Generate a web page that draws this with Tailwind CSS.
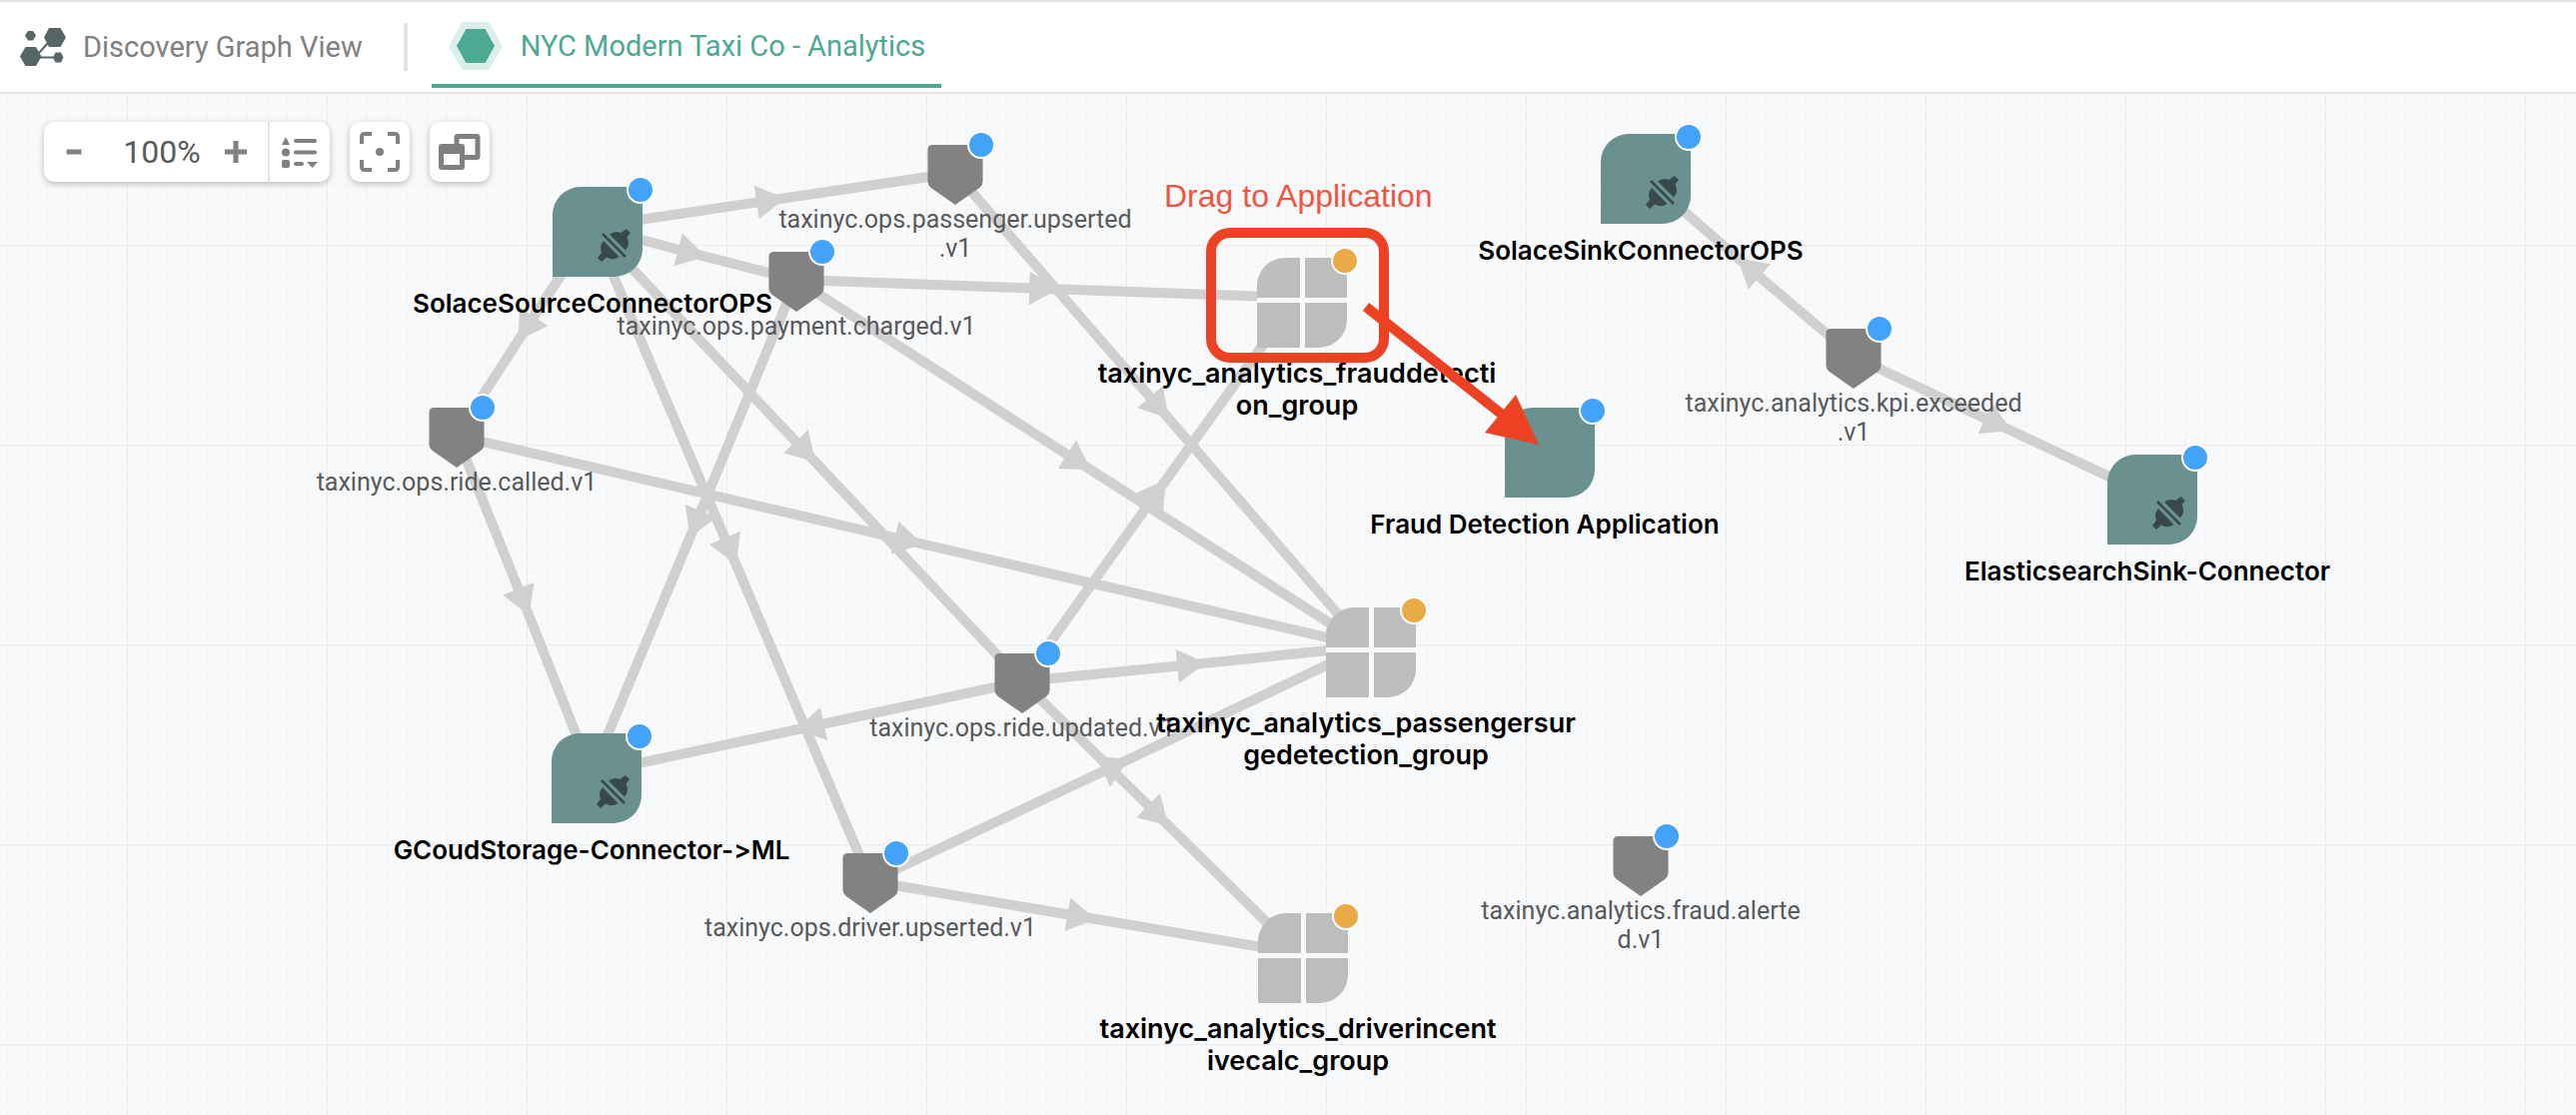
<!DOCTYPE html>
<html lang="en">
<head>
<meta charset="utf-8">
<title>NYC Modern Taxi Co - Analytics</title>
<script src="https://cdn.jsdelivr.net/npm/@tailwindcss/browser@4"></script>
</head>
<body class="flex min-h-screen flex-col bg-white font-['Roboto',sans-serif]">

<svg class="hidden" aria-hidden="true">
  <symbol id="badge-shape" viewBox="0 0 28 28"><circle cx="14" cy="14" r="13" fill="currentColor" stroke="#fbfcfd" stroke-width="2"/></symbol>
  <symbol id="app" viewBox="0 0 90 90"><path fill="#6a918f" d="M28 0H90V62A28 28 0 0 1 62 90H0V28A28 28 0 0 1 28 0Z"/></symbol>
  <symbol id="plug" viewBox="0 0 33 33">
    <g fill="#374a49">
      <path d="M12 5.500A11.500 11.500 0 0 1 23.500 4L28.500 0L33 4L29.500 8.500A11.500 11.500 0 0 1 28 21.500Z"/>
      <path d="M6 12L21.500 28A11.500 11.500 0 0 1 9 28.500L4 33L0 29L4 24A11.500 11.500 0 0 1 6 12Z"/>
    </g>
    <path d="M5 5L28 28" stroke="#374a49" stroke-width="2.500"/>
  </symbol>
  <symbol id="group" viewBox="0 0 90 90"><path fill="#f8f9fb" d="M28 0H90V62A28 28 0 0 1 62 90H0V28A28 28 0 0 1 28 0Z"/><path fill="#bdbdbd" d="M28 0H43V40H0V28A28 28 0 0 1 28 0ZM48 0H90V40H48ZM0 45H43V90H0ZM48 45H90V62A28 28 0 0 1 62 90H48Z"/></symbol>
  <symbol id="event" viewBox="0 0 56 61"><path fill="#828282" d="M5 0H51Q56 0 56 5V37Q56 41 53 43.500L28 61L3 43.500Q0 41 0 37V5Q0 0 5 0Z"/></symbol>
</svg>

<header class="flex h-[94px] shrink-0 items-center border-y-2 border-[#e3e3e3] bg-white text-[29px] leading-8">
  <a href="#" class="ml-5 flex items-center gap-4 text-[#808080]">
    <svg class="h-[38px] w-[47px]" viewBox="0 0 47 38" fill="#546766" aria-hidden="true">
      <path d="M19 25L28 15M20 29.500H34" stroke="#546766" stroke-width="2"/>
      <path d="M29 0H40.500L46 9.500L40.500 19H29L24 9.500ZM5.500 19H16L21.500 28.500L16 38H5.500L0 28.500ZM8 3H13L16 7.500L13 12.500H8L5 7.500ZM35.500 24.500H41L43.500 29.500L41 34.500H35.500L33 29.500Z"/>
    </svg>
    Discovery Graph View
  </a>
  <span class="ml-[41px] h-12 w-1 bg-[#e3e3e3]"></span>
  <a href="#" aria-current="page" class="mb-1 ml-6 flex h-20 items-center gap-[18px] self-end border-b-4 border-[#4ca992] pr-4 pl-[17px] text-[#4ca992]">
    <svg class="h-12 w-[54px]" viewBox="0 0 54 48" aria-hidden="true"><path fill="#dbeee9" d="M13.500 0H40.500L54 24L40.500 48H13.500L0 24Z"/><path fill="#4ca992" d="M17.500 7H36.500L46 24L36.500 41H17.500L8 24Z"/></svg>
    NYC Modern Taxi Co - Analytics
  </a>
</header>

<main class="relative flex-1 overflow-hidden bg-[#f8f9fb] bg-[linear-gradient(to_right,#e9ebed_1px,transparent_1px),linear-gradient(to_bottom,#e9ebed_1px,transparent_1px),linear-gradient(to_right,#f2f4f6_1px,transparent_1px),linear-gradient(to_bottom,#f2f4f6_1px,transparent_1px)] bg-[length:200px_200px,200px_200px,20px_20px,20px_20px] bg-[position:127px_151px,127px_151px,7px_11px,7px_11px]">

  <!-- edges -->
  <svg class="absolute inset-0 h-full w-full" aria-hidden="true">
    <defs>
      <marker id="arrow" markerUnits="userSpaceOnUse" markerWidth="30" markerHeight="34" refX="17" refY="17" orient="auto"><path d="M0 0L29 17L0 34Z" fill="#d0d0d0"/></marker>
    </defs>
    <g transform="translate(0 -94)" fill="none" stroke="#d0d0d0" stroke-width="10" marker-mid="url(#arrow)">
      <path d="M593 227L774 200L956 173"/>
      <path d="M593 227L695 254L797 280"/>
      <path d="M593 227L525 331L457 436"/>
      <path d="M593 227L808 454L1023 682"/>
      <path d="M593 227L732 554L871 882"/>
      <path d="M797 280L1047 289L1298 298"/>
      <path d="M797 280L1082 464L1367 647"/>
      <path d="M797 280L695 527L592 774"/>
      <path d="M956 173L1162 410L1367 647"/>
      <path d="M457 436L525 605L592 774"/>
      <path d="M457 436L912 542L1367 647"/>
      <path d="M1023 682L1195 665L1367 647"/>
      <path d="M1023 682L808 728L592 774"/>
      <path d="M1023 682L1160 490L1298 298"/>
      <path d="M1023 682L1161 818L1299 954"/>
      <path d="M871 882L1119 765L1367 647"/>
      <path d="M871 882L1085 918L1299 954"/>
      <path d="M1855 357L1748 266L1642 174"/>
      <path d="M1855 357L2002 426L2149 495"/>
    </g>
  </svg>

  <!-- events -->
  <div class="text-center text-[25px] leading-[29px] whitespace-nowrap text-[#58595b]">
    <div class="absolute top-[51px] left-[928px] flex w-14 flex-col items-center">
      <svg class="h-[60px] w-14"><use href="#event"/></svg><svg class="absolute -top-3.5 left-10 size-7 text-[#43a2fa]"><use href="#badge-shape"/></svg>
      <p>taxinyc.ops.passenger.upserted<br>.v1</p>
    </div>
    <div class="absolute top-[158px] left-[769px] flex w-14 flex-col items-center">
      <svg class="h-[60px] w-14"><use href="#event"/></svg><svg class="absolute -top-3.5 left-10 size-7 text-[#43a2fa]"><use href="#badge-shape"/></svg>
      <p>taxinyc.ops.payment.charged.v1</p>
    </div>
    <div class="absolute top-[314px] left-[429px] flex w-14 flex-col items-center">
      <svg class="h-[60px] w-14"><use href="#event"/></svg><svg class="absolute -top-3.5 left-10 size-7 text-[#43a2fa]"><use href="#badge-shape"/></svg>
      <p>taxinyc.ops.ride.called.v1</p>
    </div>
    <div class="absolute top-[560px] left-[995px] flex w-14 flex-col items-center">
      <svg class="h-[60px] w-14"><use href="#event"/></svg><svg class="absolute -top-3.5 left-10 size-7 text-[#43a2fa]"><use href="#badge-shape"/></svg>
      <p>taxinyc.ops.ride.updated.v1</p>
    </div>
    <div class="absolute top-[760px] left-[843px] flex w-14 flex-col items-center">
      <svg class="h-[60px] w-14"><use href="#event"/></svg><svg class="absolute -top-3.5 left-10 size-7 text-[#43a2fa]"><use href="#badge-shape"/></svg>
      <p>taxinyc.ops.driver.upserted.v1</p>
    </div>
    <div class="absolute top-[235px] left-[1827px] flex w-14 flex-col items-center">
      <svg class="h-[60px] w-14"><use href="#event"/></svg><svg class="absolute -top-3.5 left-10 size-7 text-[#43a2fa]"><use href="#badge-shape"/></svg>
      <p>taxinyc.analytics.kpi.exceeded<br>.v1</p>
    </div>
    <div class="absolute top-[743px] left-[1614px] flex w-14 flex-col items-center">
      <svg class="h-[60px] w-14"><use href="#event"/></svg><svg class="absolute -top-3.5 left-10 size-7 text-[#43a2fa]"><use href="#badge-shape"/></svg>
      <p>taxinyc.analytics.fraud.alerte<br>d.v1</p>
    </div>
  </div>

  <!-- applications -->
  <div class="text-center font-['Inter',sans-serif] text-[26px] leading-8 font-semibold whitespace-nowrap text-black [font-feature-settings:'calt'_0]">
    <div class="absolute top-[93px] left-[553px] flex w-20 flex-col items-center gap-[11px]">
      <svg class="size-[90px] shrink-0 self-start"><use href="#app"/></svg><svg class="absolute top-[42px] left-[45px] size-[33px]"><use href="#plug"/></svg><svg class="absolute -top-[11px] left-[74px] size-7 text-[#43a2fa]"><use href="#badge-shape"/></svg>
      <p>SolaceSourceConnectorOPS</p>
    </div>
    <div class="absolute top-[640px] left-[552px] flex w-20 flex-col items-center gap-[11px]">
      <svg class="size-[90px] shrink-0 self-start"><use href="#app"/></svg><svg class="absolute top-[42px] left-[45px] size-[33px]"><use href="#plug"/></svg><svg class="absolute -top-[11px] left-[74px] size-7 text-[#43a2fa]"><use href="#badge-shape"/></svg>
      <p>GCoudStorage-Connector-&gt;ML</p>
    </div>
    <div class="absolute top-[40px] left-[1602px] flex w-20 flex-col items-center gap-[11px]">
      <svg class="size-[90px] shrink-0 self-start"><use href="#app"/></svg><svg class="absolute top-[42px] left-[45px] size-[33px]"><use href="#plug"/></svg><svg class="absolute -top-[11px] left-[74px] size-7 text-[#43a2fa]"><use href="#badge-shape"/></svg>
      <p>SolaceSinkConnectorOPS</p>
    </div>
    <div class="absolute top-[361px] left-[2109px] flex w-20 flex-col items-center gap-[11px]">
      <svg class="size-[90px] shrink-0 self-start"><use href="#app"/></svg><svg class="absolute top-[42px] left-[45px] size-[33px]"><use href="#plug"/></svg><svg class="absolute -top-[11px] left-[74px] size-7 text-[#43a2fa]"><use href="#badge-shape"/></svg>
      <p>ElasticsearchSink-Connector</p>
    </div>
    <div class="absolute top-[314px] left-[1506px] flex w-20 flex-col items-center gap-[11px]">
      <svg class="size-[90px] shrink-0 self-start"><use href="#app"/></svg><svg class="absolute -top-[11px] left-[74px] size-7 text-[#43a2fa]"><use href="#badge-shape"/></svg>
      <p>Fraud Detection Application</p>
    </div>
  </div>

  <!-- consumer groups -->
  <div class="text-center font-['Inter',sans-serif] text-[27px] leading-8 font-semibold whitespace-nowrap text-black">
    <div class="absolute top-[164px] left-[1258px] flex w-20 flex-col items-center gap-2.5">
      <svg class="size-[90px] shrink-0 self-start"><use href="#group"/></svg><svg class="absolute -top-[11px] left-[74px] size-7 text-[#e8ab45]"><use href="#badge-shape"/></svg>
      <p>taxinyc_analytics_frauddetecti<br>on_group</p>
    </div>
    <div class="absolute top-[514px] left-[1327px] flex w-20 flex-col items-center gap-2.5">
      <svg class="size-[90px] shrink-0 self-start"><use href="#group"/></svg><svg class="absolute -top-[11px] left-[74px] size-7 text-[#e8ab45]"><use href="#badge-shape"/></svg>
      <p>taxinyc_analytics_passengersur<br>gedetection_group</p>
    </div>
    <div class="absolute top-[820px] left-[1259px] flex w-20 flex-col items-center gap-2.5">
      <svg class="size-[90px] shrink-0 self-start"><use href="#group"/></svg><svg class="absolute -top-[11px] left-[74px] size-7 text-[#e8ab45]"><use href="#badge-shape"/></svg>
      <p>taxinyc_analytics_driverincent<br>ivecalc_group</p>
    </div>
  </div>

  <!-- drag hint -->
  <p class="absolute top-[84px] left-[1165px] font-['Liberation_Sans',sans-serif] text-[32px] leading-9 whitespace-nowrap text-[#f1533f]">Drag to Application</p>
  <div class="absolute top-[134px] left-[1207px] h-[135px] w-[183px] rounded-3xl border-10 border-[#ed4123]"></div>
  <svg class="absolute top-[206px] left-[1360px] h-[150px] w-[184px]" viewBox="1360 300 184 150" aria-hidden="true"><path d="M1367 307L1506 417" stroke="#ed4123" stroke-width="10"/><path d="M1540 445L1517 395L1486 433Z" fill="#ed4123"/></svg>

  <!-- toolbar -->
  <div class="relative flex w-max gap-5 pt-7 pl-11 text-[#808080]">
    <div class="flex h-[60px] items-center rounded-[10px] bg-white shadow-[0_2px_6px_rgba(0,0,0,0.25)]">
      <button aria-label="Zoom out" class="flex h-full w-[60px] items-center justify-center"><svg class="size-7" viewBox="0 0 28 28"><path d="M6.500 14H21.500" stroke="currentColor" stroke-width="5"/></svg></button>
      <output class="w-[116px] text-center text-[32px] leading-9 text-[#58595b]">100%</output>
      <button aria-label="Zoom in" class="flex h-full w-12 items-center pl-[5px]"><svg class="size-[22px]" viewBox="0 0 22 22"><path d="M0 11H22M11 0V22" stroke="currentColor" stroke-width="5"/></svg></button>
      <button aria-label="Legend" class="flex h-full w-[62px] items-center justify-center border-l-2 border-[#e3e3e3]"><svg class="h-[31px] w-9" viewBox="0 0 36 31" fill="currentColor"><path d="M4 0L8 8H0ZM25 25H36L30.500 31Z"/><circle cx="4" cy="15.500" r="4"/><rect y="23" width="8" height="8" rx="2"/><path d="M14 4H33M14 15.500H33M14 27H20" stroke="currentColor" stroke-width="4" stroke-linecap="round"/></svg></button>
    </div>
    <button aria-label="Center graph" class="flex size-[60px] items-center justify-center rounded-[10px] bg-white shadow-[0_2px_6px_rgba(0,0,0,0.25)]"><svg class="size-10" viewBox="0 0 40 40" fill="none" stroke="currentColor" stroke-width="4"><path d="M2 12V5Q2 2 5 2H12M28 2H35Q38 2 38 5V12M38 28V35Q38 38 35 38H28M12 38H5Q2 38 2 35V28"/><circle cx="20" cy="20" r="4" fill="currentColor" stroke="none"/></svg></button>
    <button aria-label="Show overview" class="flex size-[60px] items-center justify-center rounded-[10px] bg-white shadow-[0_2px_6px_rgba(0,0,0,0.25)]"><svg class="h-9 w-[42px]" viewBox="0 0 42 36"><rect x="18" y="2.500" width="21" height="21" rx="1" fill="none" stroke="currentColor" stroke-width="5"/><rect y="10" width="26" height="26" rx="3" fill="currentColor"/><path d="M5 20H21V31H5Z" fill="#fff"/></svg></button>
  </div>
</main>
</body>
</html>
